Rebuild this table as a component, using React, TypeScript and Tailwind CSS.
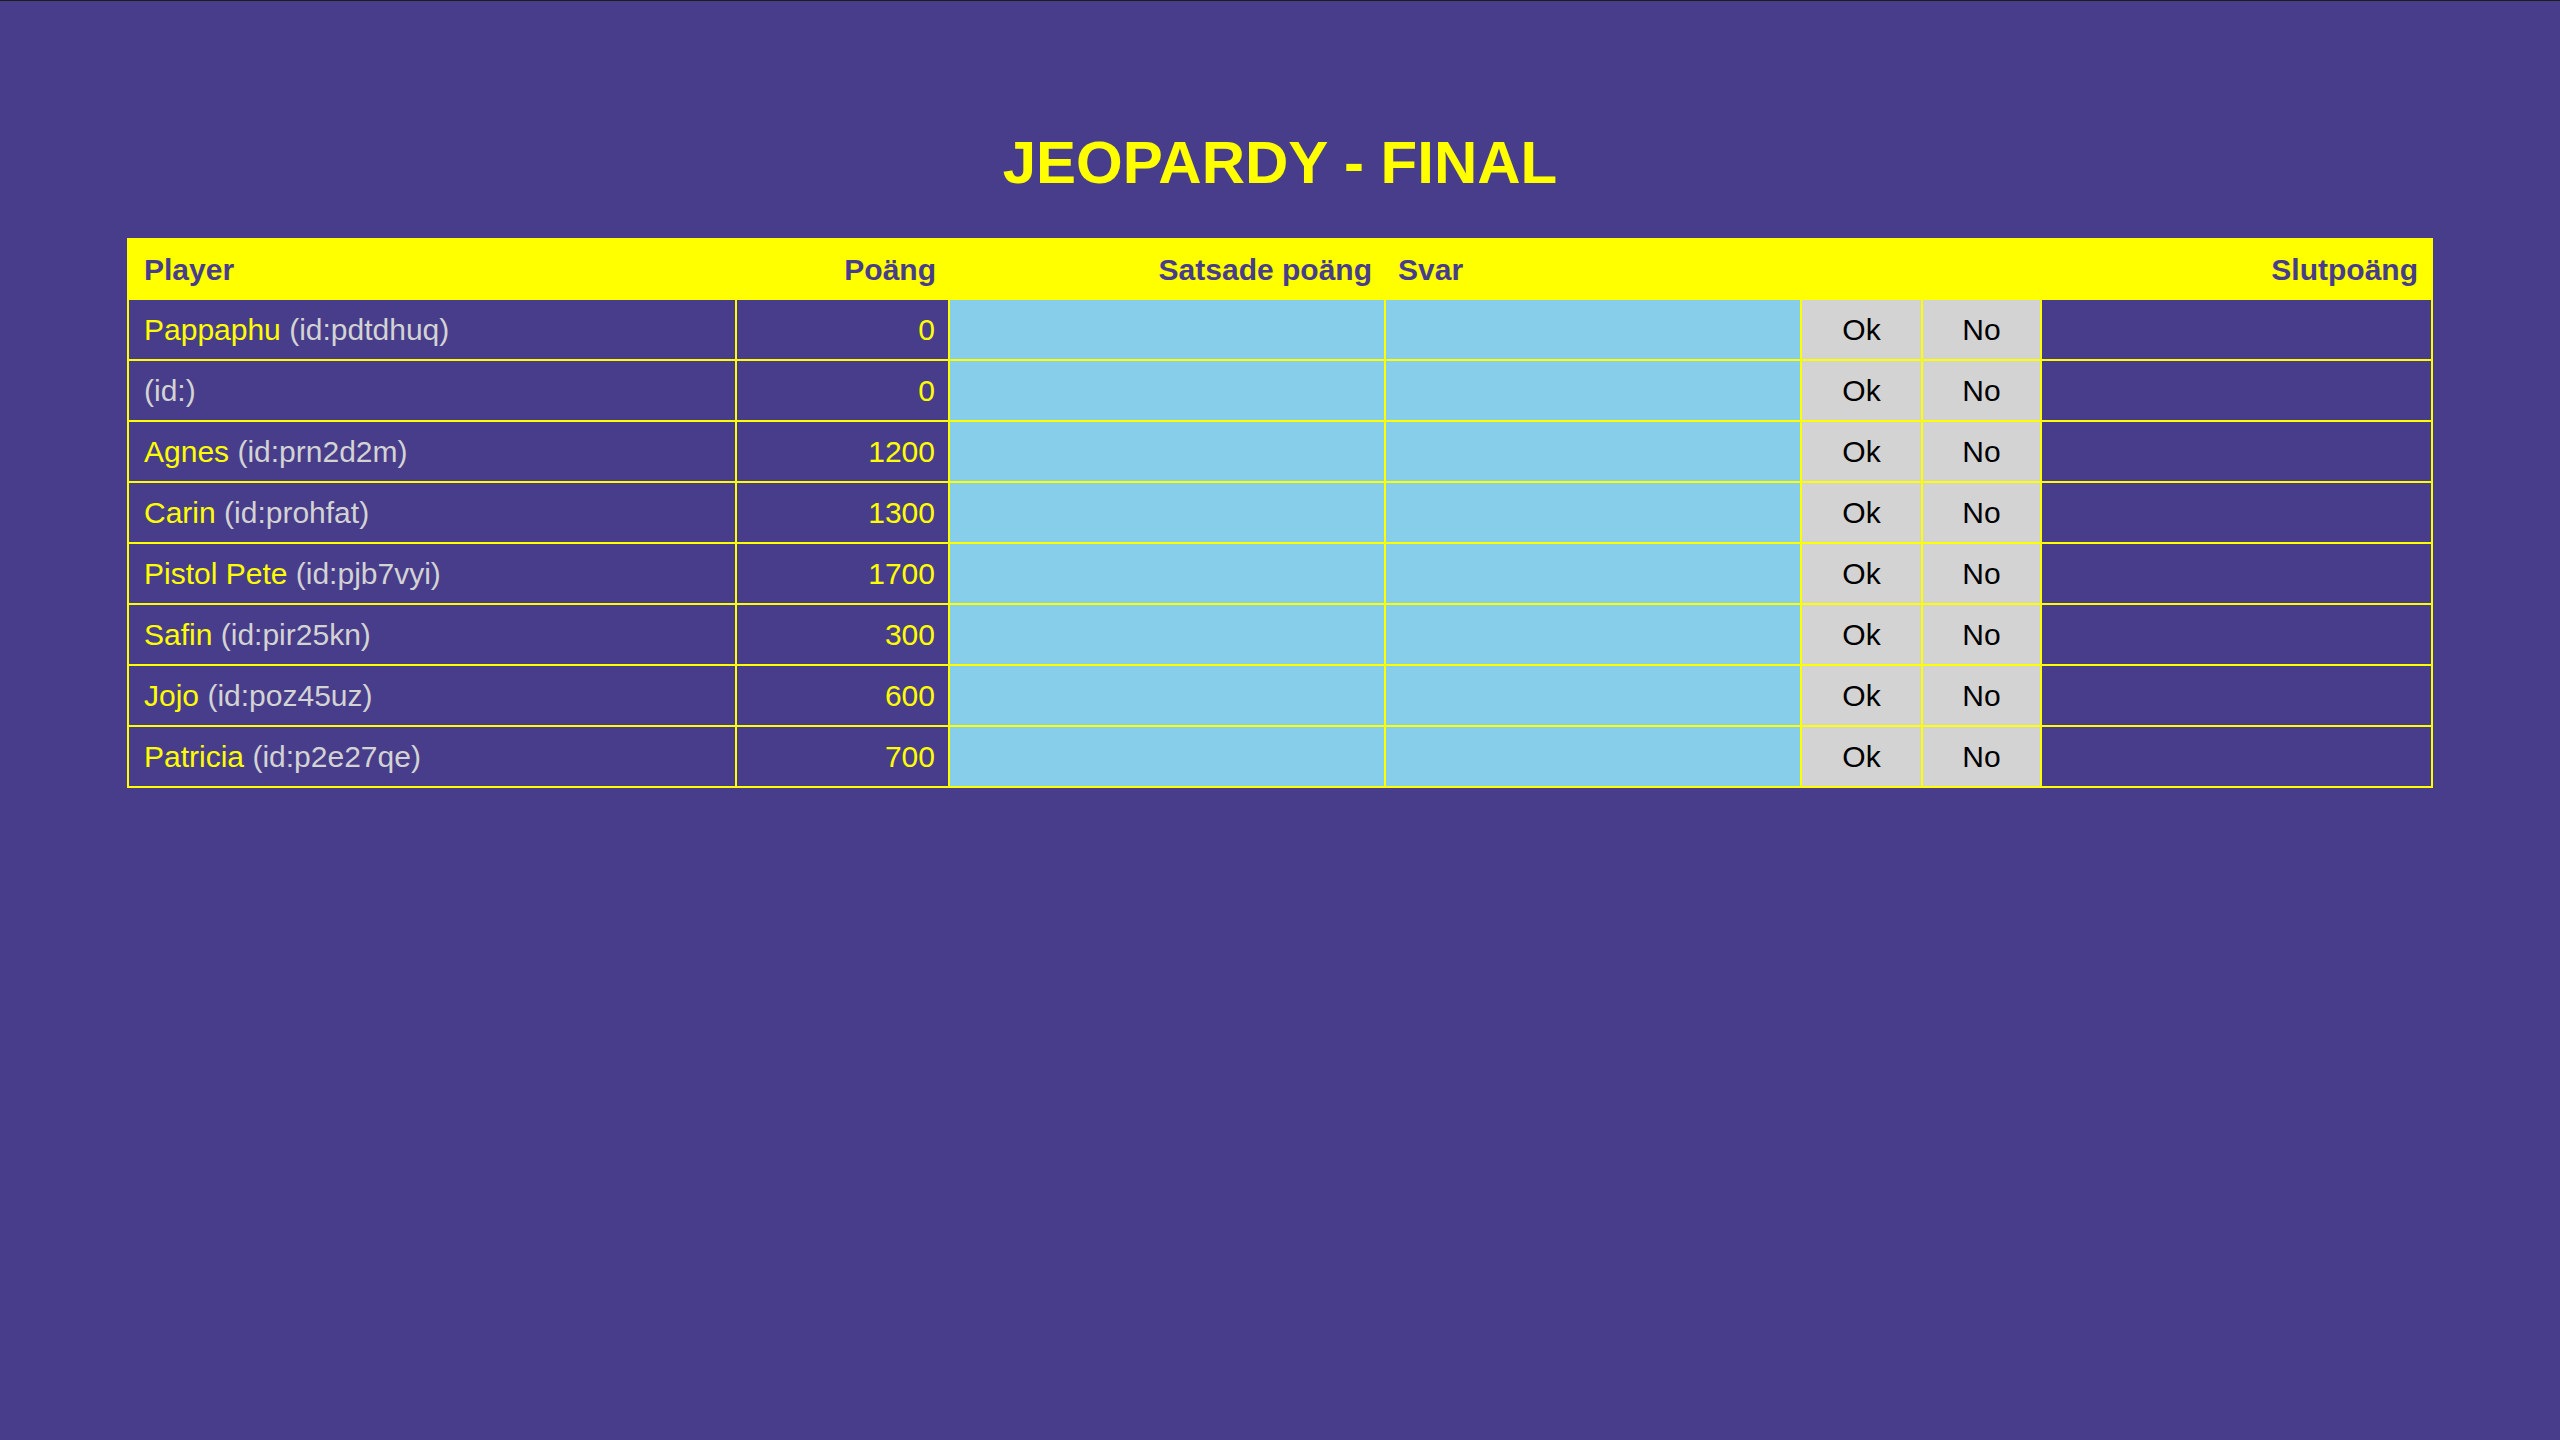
import React from "react";

type Row = { name: string; id: string; score: number };

const rows: Row[] = [
  { name: "Pappaphu", id: "pdtdhuq", score: 0 },
  { name: "", id: "", score: 0 },
  { name: "Agnes", id: "prn2d2m", score: 1200 },
  { name: "Carin", id: "prohfat", score: 1300 },
  { name: "Pistol Pete", id: "pjb7vyi", score: 1700 },
  { name: "Safin", id: "pir25kn", score: 300 },
  { name: "Jojo", id: "poz45uz", score: 600 },
  { name: "Patricia", id: "p2e27qe", score: 700 },
];

export default function App() {
  return (
    <div
      className="min-h-screen w-full bg-[#483d8b] border-t border-[#1c1c1c]"
      style={{ fontFamily: '"Liberation Sans", Arial, sans-serif' }}
    >
      <h1 className="pt-[127px] mb-[41px] text-center text-[60px] leading-[69px] font-bold text-[#ffff00]">
        JEOPARDY - FINAL
      </h1>
      <table className="mx-auto w-[2304px] table-fixed border-collapse border-2 border-[#ffff00] text-[30px] leading-[35px]">
        <colgroup>
          <col className="w-[608px]" />
          <col className="w-[213px]" />
          <col className="w-[436px]" />
          <col className="w-[416px]" />
          <col className="w-[121px]" />
          <col className="w-[119px]" />
          <col className="w-[391px]" />
        </colgroup>
        <thead>
          <tr className="bg-[#ffff00] text-[#483d8b] font-bold">
            <th className="h-[60px] pl-[15px] pr-[13px] text-left font-bold">Player</th>
            <th className="px-[13px] text-right font-bold">Poäng</th>
            <th className="px-[13px] text-right font-bold">Satsade poäng</th>
            <th className="px-[13px] text-left font-bold">Svar</th>
            <th className="px-[13px]"></th>
            <th className="px-[13px]"></th>
            <th className="px-[13px] text-right font-bold">Slutpoäng</th>
          </tr>
        </thead>
        <tbody>
          {rows.map((r, i) => (
            <tr key={i}>
              <td className="h-[61px] border-2 border-[#ffff00] pl-[15px] pr-[13px] text-left whitespace-nowrap">
                {r.name && <span className="text-[#ffff00]">{r.name} </span>}
                <span className="text-[#d3d3d3]">(id:{r.id})</span>
              </td>
              <td className="border-2 border-[#ffff00] px-[13px] text-right text-[#ffff00]">
                {r.score}
              </td>
              <td className="border-2 border-[#ffff00] bg-[#87ceeb]"></td>
              <td className="border-2 border-[#ffff00] bg-[#87ceeb]"></td>
              <td className="border-2 border-[#ffff00] bg-[#d3d3d3] text-center text-black">Ok</td>
              <td className="border-2 border-[#ffff00] bg-[#d3d3d3] text-center text-black">No</td>
              <td className="border-2 border-[#ffff00]"></td>
            </tr>
          ))}
        </tbody>
      </table>
    </div>
  );
}
